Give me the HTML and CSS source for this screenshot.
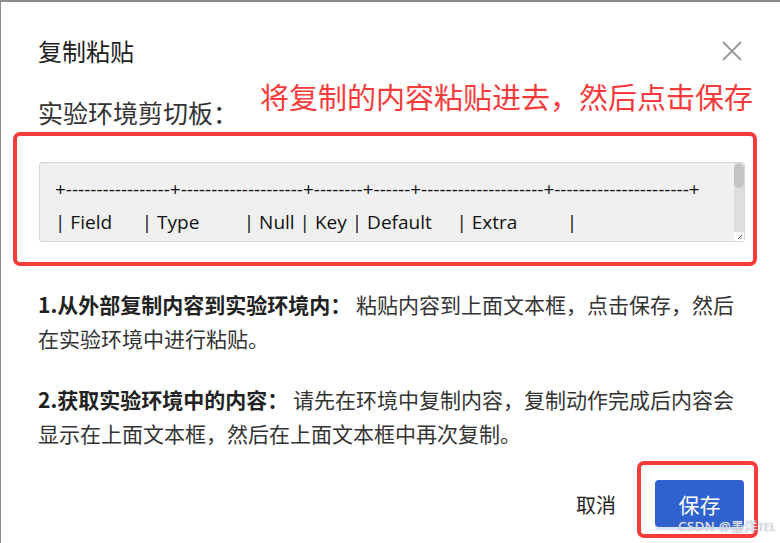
FILE: index.html
```html
<!DOCTYPE html>
<html lang="zh-CN">
<head>
<meta charset="utf-8">
<title>复制粘贴</title>
<link rel="stylesheet" href="styles.css">
</head>
<body>
<div class="modal">
  <div class="modal-header">
    <h2 class="modal-title">复制粘贴</h2>
    <button class="close-btn" aria-label="关闭">
      <svg width="20" height="20" viewBox="0 0 20 20"><path d="M1 1 L19 19 M19 1 L1 19" stroke="#9a9a9a" stroke-width="1.8" fill="none"/></svg>
    </button>
  </div>
  <div class="label-row">
    <span class="clip-label">实验环境剪切板：</span>
    <span class="note">将复制的内容粘贴进去，然后点击保存</span>
  </div>
  <div class="mark-box">
    <div class="clip-wrap">
      <textarea class="clip-area" spellcheck="false">+-----------------+--------------------+--------+------+--------------------+----------------------+
| Field      | Type         | Null | Key | Default     | Extra          |
+-----------------+--------------------+--------+------+--------------------+----------------------+
| id         | int(11)      | NO   | PRI | NULL        | auto_increment |
| name       | varchar(50)  | YES  |     | NULL        |                |
+-----------------+--------------------+--------+------+--------------------+----------------------+</textarea>
      <div class="fake-scroll" aria-hidden="true"><div class="fake-thumb"></div></div>
      <div class="fake-resizer" aria-hidden="true">
        <svg width="6" height="6" viewBox="0 0 6 6"><path d="M5 1 L1 5 M5 3.5 L3.5 5" stroke="#555" stroke-width="1" fill="none"/></svg>
      </div>
    </div>
  </div>
  <div class="help">
    <p class="help-item"><strong>1.从外部复制内容到实验环境内：</strong> 粘贴内容到上面文本框，点击保存，然后在实验环境中进行粘贴。</p>
    <p class="help-item"><strong>2.获取实验环境中的内容：</strong> 请先在环境中复制内容，复制动作完成后内容会显示在上面文本框，然后在上面文本框中再次复制。</p>
  </div>
  <div class="modal-footer">
    <button class="btn-cancel">取消</button>
    <div class="mark-btn">
      <button class="btn-save">保存</button>
    </div>
    <span class="watermark">CSDN @墨洋<small>TEL</small></span>
  </div>
</div>
</body>
</html>
```

FILE: styles.css
```css
* { box-sizing: border-box; }
html, body { height: 100%; }
body {
  margin: 0;
  padding: 2px 0 0 1px;
  background: #8a8a8a;
  font-family: "Noto Sans CJK SC", "Noto Sans", sans-serif;
  color: #222;
  overflow: hidden;
}
.modal {
  position: relative;
  background: #fff;
  height: 100%;
  padding: 0 38px 0 37px;
}
.modal-header {
  display: flex;
  justify-content: space-between;
  align-items: center;
  padding-top: 27px;
  height: 70px;
}
.modal-title {
  margin: 0;
  font-size: 24px;
  font-weight: 400;
  line-height: 36px;
  color: #1f1f1f;
}
.close-btn {
  border: 0;
  background: none;
  padding: 0;
  width: 20px;
  height: 20px;
  display: flex;
}
.label-row {
  display: flex;
  justify-content: space-between;
  align-items: flex-start;
  height: 60px;
  margin-right: -11px;
}
.clip-label {
  font-size: 25px;
  line-height: 36px;
  margin-top: 22px;
  color: #333;
}
.note {
  font-size: 29px;
  line-height: 40px;
  margin-top: 4px;
  color: #f73b3b;
}
.mark-box {
  margin-left: -25px;
  margin-right: -15px;
  border: 4px solid #f73b3b;
  border-radius: 7px;
  padding: 26px 8px 20px 22px;
}
.clip-wrap {
  position: relative;
}
.clip-area {
  display: block;
  width: 100%;
  height: 80px;
  resize: vertical;
  background: #f0f0f0;
  border: 1px solid #d6d6d6;
  border-radius: 3px;
  padding: 10px 14px 0 15px;
  font-family: "Open Sans", "Noto Sans", sans-serif;
  font-size: 19px;
  line-height: 33px;
  color: #111;
  white-space: pre;
  overflow: hidden;
  outline: none;
}
.clip-area::-webkit-resizer { background: transparent; }
.fake-scroll {
  position: absolute;
  top: 1px;
  right: 1px;
  width: 10px;
  height: 69px;
  background: #dedede;
}
.fake-thumb {
  width: 10px;
  height: 24px;
  margin-top: 1px;
  border-radius: 5px;
  background: #c4c4c4;
}
.fake-resizer {
  position: absolute;
  right: 1px;
  bottom: 1px;
  width: 10px;
  height: 9px;
  background: #fff;
  display: flex;
  align-items: flex-end;
  justify-content: flex-end;
  padding: 0 1px 1px 0;
}
.help {
  padding-top: 21px;
  width: 706px;
}
.help-item {
  margin: 0 0 27px;
  font-size: 21px;
  line-height: 34px;
  color: #333;
}
.help-item strong {
  font-weight: 700;
  color: #222;
}
.modal-footer {
  display: flex;
  justify-content: flex-end;
  align-items: center;
  gap: 21px;
  margin-right: -16px;
  margin-top: -16px;
}
.btn-cancel {
  border: 0;
  background: none;
  font: inherit;
  font-size: 20px;
  color: #222;
  padding: 0;
  margin-top: 10px;
}
.mark-btn {
  border: 4px solid #f73b3b;
  border-radius: 7px;
  padding: 15px 10px 7px 14px;
}
.btn-save {
  display: block;
  width: 89px;
  height: 47px;
  border: 0;
  border-radius: 4px;
  background: #2f62cf;
  color: #fff;
  font: inherit;
  font-size: 21px;
  box-shadow: 0 3px 0 #dfe8f8;
}
.watermark {
  position: absolute;
  right: 4px;
  bottom: 8px;
  font-family: "Noto Sans", "Noto Sans CJK SC", sans-serif;
  font-size: 13px;
  color: rgba(255,255,255,0.75);
  text-shadow: 0 0 1px #9aa4b8, 0 0 1px #9aa4b8;
  letter-spacing: 0.5px;
}
.watermark small {
  font-size: 10px;
}
```
